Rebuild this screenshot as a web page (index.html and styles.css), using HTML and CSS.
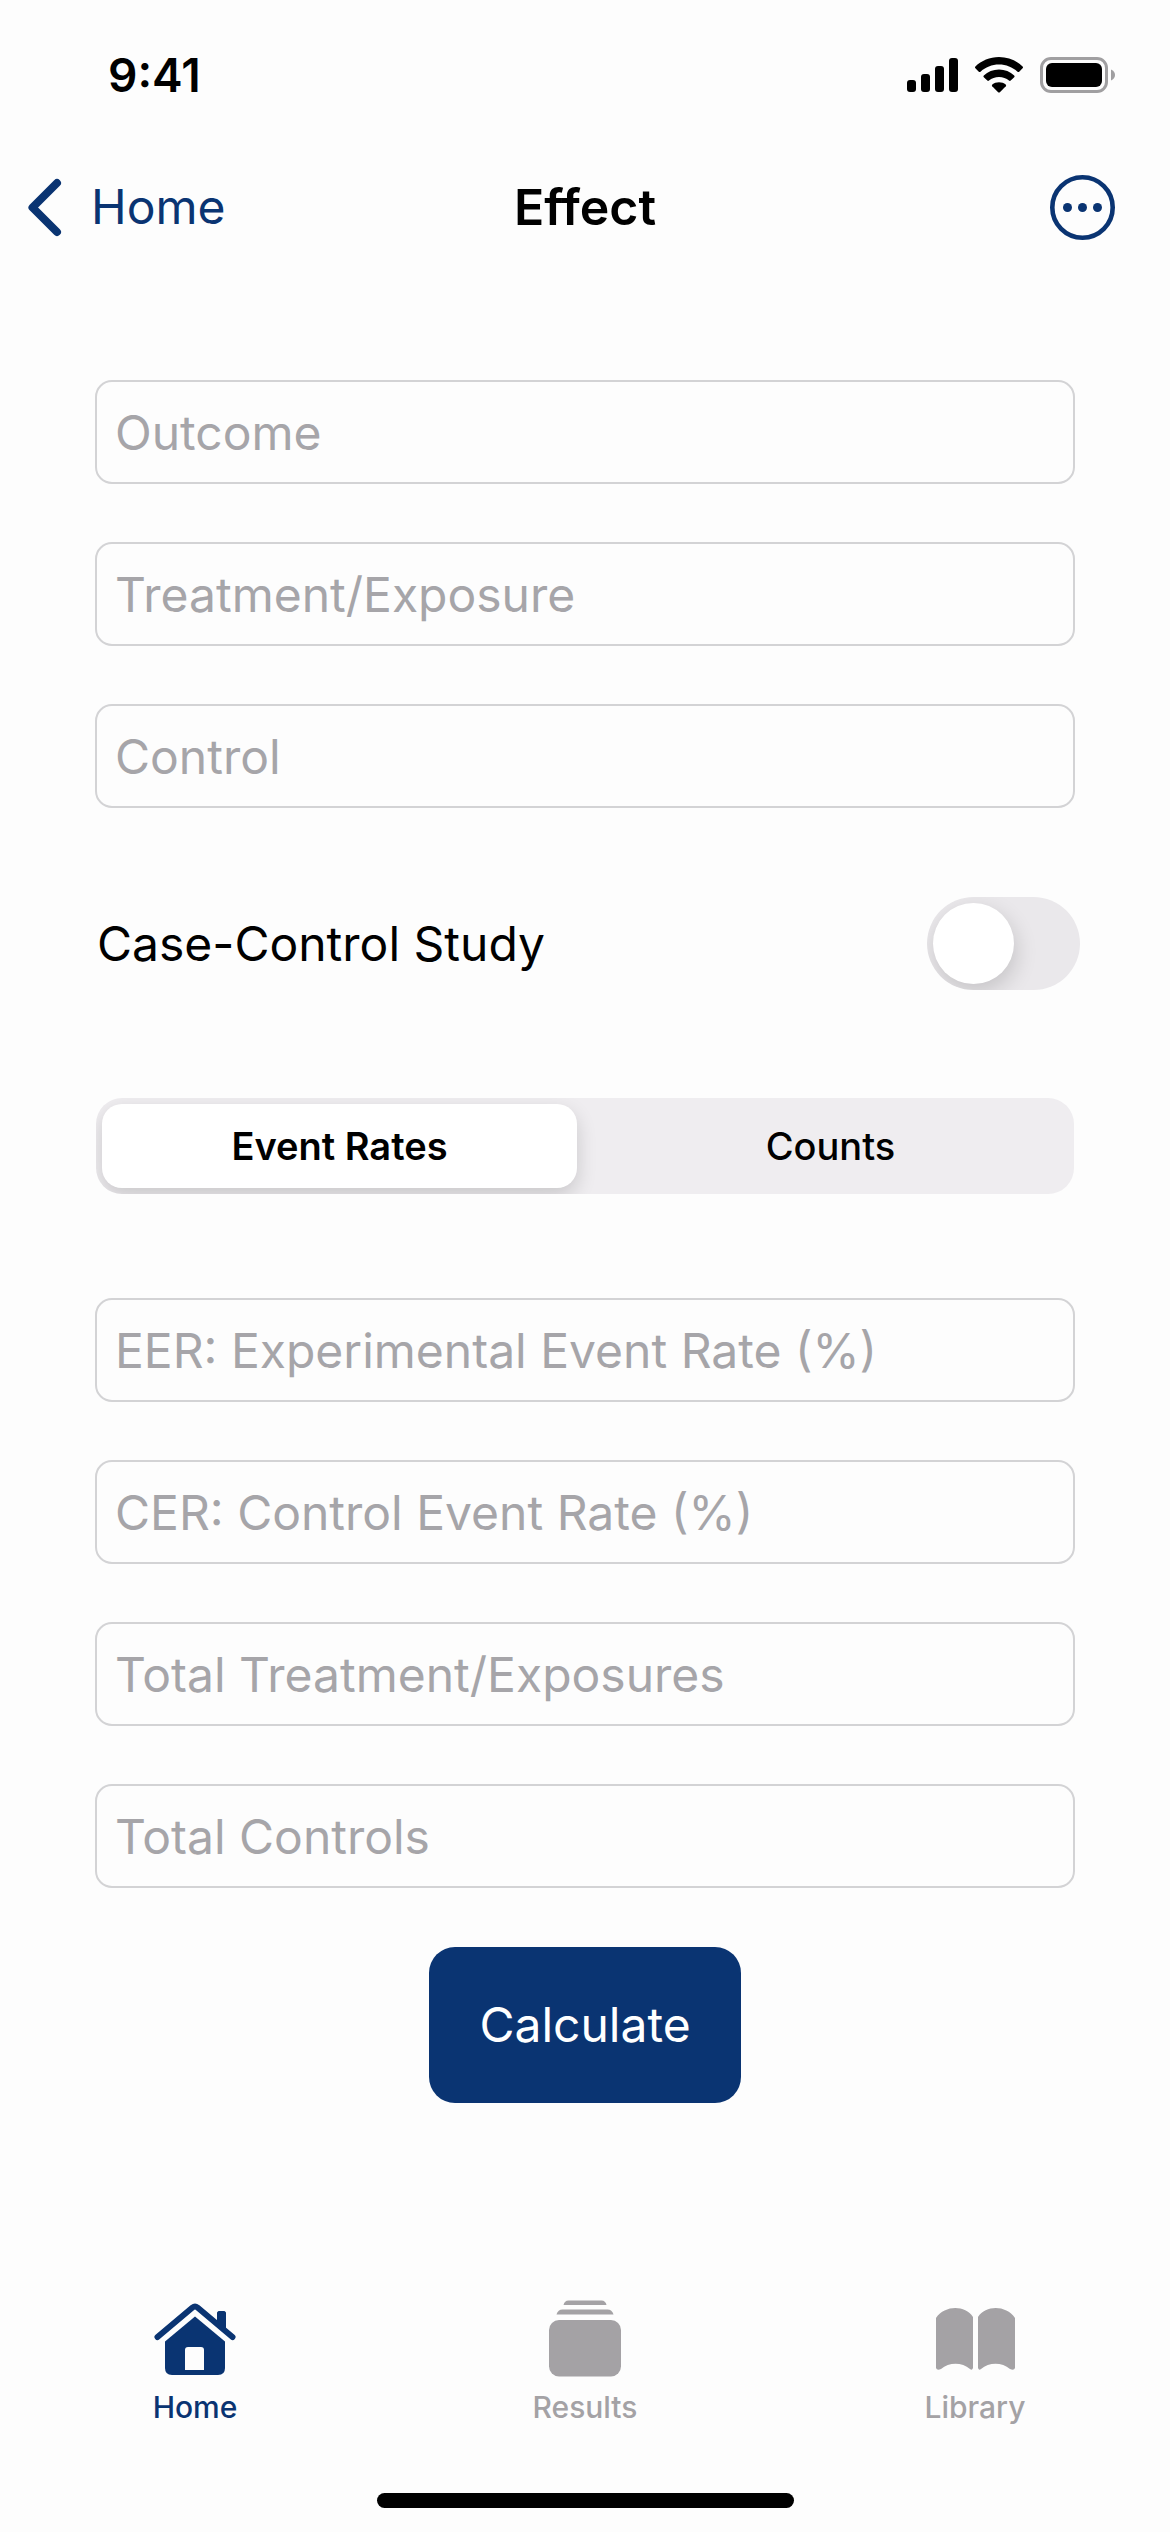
FILE: index.html
```html
<!DOCTYPE html>
<html lang="en">
<head>
<meta charset="utf-8">
<meta name="viewport" content="width=device-width, initial-scale=1">
<title>Effect</title>
<link rel="stylesheet" href="styles.css">
</head>
<body>
<div class="status-bar">
  <time class="clock">9:41</time>
  <div class="status-icons">
    <svg width="51" height="34" viewBox="0 0 51 34" aria-hidden="true"><rect x="0" y="22" width="9" height="12" rx="3"/><rect x="14" y="16" width="9" height="18" rx="3"/><rect x="28" y="8" width="9" height="26" rx="3"/><rect x="42" y="0" width="9" height="34" rx="3"/></svg>
    <svg width="48" height="36" viewBox="0 0 48 36" aria-hidden="true"><path d="M24 0C33.300 0 41.500 3.600 47.600 9.400Q48.500 10.300 47.600 11.200L44.200 14.700Q43.400 15.500 42.500 14.700C37.600 10.300 31 7.600 24 7.600S10.400 10.300 5.500 14.700Q4.600 15.500 3.800 14.700L.4 11.200Q-.5 10.300.4 9.400C6.500 3.600 14.700 0 24 0Z"/><path d="M24 12.600C29.900 12.600 35.200 14.800 39.200 18.400Q40.100 19.300 39.200 20.200L35.700 23.600Q34.900 24.400 34 23.600C31.300 21.400 27.800 20.100 24 20.100S16.700 21.400 14 23.600Q13.100 24.400 12.300 23.600L8.800 20.200Q7.900 19.300 8.800 18.400C12.800 14.800 18.100 12.600 24 12.600Z"/><path d="M24 25.200C26.600 25.200 28.900 26.100 30.700 27.500Q31.600 28.300 30.800 29.200L24.900 35.200Q24 36 23.100 35.200L17.200 29.200Q16.400 28.300 17.300 27.500C19.100 26.100 21.400 25.200 24 25.200Z"/></svg>
    <svg width="75" height="36" viewBox="0 0 75 36" aria-hidden="true"><rect x="1.500" y="1.500" width="65" height="33" rx="9.500" fill="none" stroke="#a09fa1" stroke-width="3"/><rect x="6" y="6" width="56" height="24" rx="6"/><path d="M71 12.500C73.600 13.500 75 15.600 75 18S73.600 22.500 71 23.500Z" fill="#a09fa1"/></svg>
  </div>
</div>

<header class="nav-bar">
  <a class="back" href="#home">
    <svg width="33" height="57" viewBox="0 0 33 57" aria-hidden="true"><path d="M29 4L4.500 28.500L29 53" fill="none" stroke="currentColor" stroke-width="8" stroke-linecap="round" stroke-linejoin="round"/></svg>
    <span>Home</span>
  </a>
  <h1 class="title">Effect</h1>
  <button class="more" type="button" aria-label="More options">
    <svg width="65" height="65" viewBox="0 0 65 65" aria-hidden="true"><circle cx="32.500" cy="32.500" r="30.200" fill="none" stroke="currentColor" stroke-width="4.600"/><circle cx="17.500" cy="32.500" r="4.500" fill="currentColor"/><circle cx="32.500" cy="32.500" r="4.500" fill="currentColor"/><circle cx="47.500" cy="32.500" r="4.500" fill="currentColor"/></svg>
  </button>
</header>

<main>
  <form class="form">
    <div class="fields">
      <input class="field" type="text" placeholder="Outcome" aria-label="Outcome">
      <input class="field" type="text" placeholder="Treatment/Exposure" aria-label="Treatment/Exposure">
      <input class="field" type="text" placeholder="Control" aria-label="Control">
    </div>
    <div class="switch-row">
      <label for="case-control">Case-Control Study</label>
      <input class="switch" id="case-control" type="checkbox" role="switch">
    </div>
    <div class="segments" role="radiogroup" aria-label="Input type">
      <input type="radio" name="mode" id="rates" checked>
      <label for="rates">Event Rates</label>
      <input type="radio" name="mode" id="counts">
      <label for="counts">Counts</label>
    </div>
    <div class="fields">
      <input class="field" type="text" placeholder="EER: Experimental Event Rate (%)" aria-label="EER: Experimental Event Rate (%)">
      <input class="field" type="text" placeholder="CER: Control Event Rate (%)" aria-label="CER: Control Event Rate (%)">
      <input class="field" type="text" placeholder="Total Treatment/Exposures" aria-label="Total Treatment/Exposures">
      <input class="field" type="text" placeholder="Total Controls" aria-label="Total Controls">
    </div>
    <button class="calculate" type="button">Calculate</button>
  </form>
</main>

<nav class="tab-bar">
  <a class="tab active" href="#home" aria-current="page">
    <svg width="82" height="78" viewBox="0 0 82 78" aria-hidden="true"><g fill="currentColor"><path d="M63 25V11Q63 8 66 8H69Q72 8 72 11V31Z"/><path d="M41 13.500L71 38.500V65Q71 72 64 72H18Q11 72 11 65V38.500Z"/></g><path d="M3.500 34L38.500 4.500Q41 2.500 43.500 4.500L78.500 34" fill="none" stroke="#fdfdfd" stroke-width="14"/><path d="M63 20V11Q63 8 66 8H69Q72 8 72 11V28Z" fill="currentColor"/><path d="M3.500 34L38.500 4.500Q41 2.500 43.500 4.500L78.500 34" fill="none" stroke="currentColor" stroke-width="6" stroke-linecap="round"/><path d="M31 67V47Q31 44 34 44H47Q50 44 50 47V67Z" fill="#fdfdfd"/></svg>
    <span>Home</span>
  </a>
  <a class="tab" href="#results">
    <svg width="72" height="78" viewBox="0 0 72 78" fill="currentColor" aria-hidden="true"><path d="M14.500 2Q15.500-2.500 19.500-2.500H52.500Q56.500-2.500 57.500 2Z"/><path d="M7.500 11.500Q9 6.500 13.500 6.500H58.500Q63 6.500 64.500 11.500Z"/><rect x="0" y="17" width="72" height="56.500" rx="10"/></svg>
    <span>Results</span>
  </a>
  <a class="tab" href="#library">
    <svg width="79" height="78" viewBox="0 0 79 78" fill="currentColor" aria-hidden="true"><path d="M0 15C9 2 29 2 37 14V65Q36 68 34 66C26 59 13 59 5 66Q1 68 0 65Z"/><path d="M42 14C50 2 70 2 79 15V65Q78 68 74 66C66 59 53 59 45 66Q43 68 42 65Z"/></svg>
    <span>Library</span>
  </a>
</nav>
<div class="home-indicator"></div>
</body>
</html>
```
FILE: styles.css
```css
* {
  box-sizing: border-box;
}

body {
  margin: 0;
  min-height: 100vh;
  display: flex;
  flex-direction: column;
  background: #fdfdfd;
  color: #000;
  font-family: Inter, "Liberation Sans", sans-serif;
  font-size: 48px;
  line-height: 60px;
}

svg {
  display: block;
  overflow: visible;
}

a {
  color: inherit;
  text-decoration: none;
}

button,
input {
  margin: 0;
  font: inherit;
}

.status-bar {
  display: flex;
  justify-content: space-between;
  align-items: center;
  height: 150px;
  padding: 0 55px 0 108px;
}

.clock {
  font-size: 46px;
  font-weight: 600;
}

.status-icons {
  display: flex;
  align-items: center;
  gap: 17px;
}

.nav-bar {
  display: grid;
  grid-template-columns: 1fr auto 1fr;
  align-items: center;
  height: 114px;
  padding: 0 55px 0 28px;
}

.back {
  display: flex;
  align-items: center;
  gap: 30px;
  color: #0a3472;
}

.title {
  margin: 0;
  padding-left: 27px;
  font-size: 50px;
  font-weight: 600;
}

.more {
  justify-self: end;
  padding: 0;
  border: 0;
  background: none;
  color: #0a3472;
}

.form {
  display: flex;
  flex-direction: column;
  padding: 116px 95px 0;
}

.fields {
  display: flex;
  flex-direction: column;
  gap: 58px;
}

.field {
  width: 100%;
  height: 104px;
  padding: 0 18px;
  border: 2px solid #d3d3d5;
  border-radius: 17px;
  background: #fdfdfd;
  outline: none;
}

.field::placeholder {
  color: #a6a5a9;
  opacity: 1;
}

.switch-row {
  display: flex;
  justify-content: space-between;
  align-items: center;
  margin: 89px -5px 108px 2px;
}

.switch {
  appearance: none;
  width: 153px;
  height: 93px;
  padding: 6px;
  border-radius: 47px;
  background: #eae8eb;
  overflow: hidden;
}

.switch::before {
  content: "";
  display: block;
  width: 81px;
  height: 81px;
  border-radius: 50%;
  background: #fff;
  box-shadow: 2px 8px 22px rgba(0, 0, 0, 0.16);
}

.switch:checked {
  background: #0a3472;
}

.switch:checked::before {
  margin-left: auto;
}

.segments {
  display: flex;
  height: 96px;
  margin: 0 1px 104px;
  padding: 6px;
  border-radius: 26px;
  background: #efedf0;
  overflow: hidden;
  font-size: 38px;
}

.segments input {
  appearance: none;
  width: 0;
  height: 0;
}

.segments label {
  flex: 1 1 0;
  display: flex;
  justify-content: center;
  align-items: center;
  border-radius: 20px;
  font-weight: 500;
}

.segments label + input {
  margin-left: 16px;
}

.segments input:checked + label {
  background: #fff;
  font-weight: 600;
  box-shadow: 0 8px 20px rgba(0, 0, 0, 0.16);
}

.calculate {
  align-self: center;
  margin-top: 59px;
  padding: 48px 50px;
  border: 0;
  border-radius: 26px;
  background: #0a3472;
  color: #fff;
}

.tab-bar {
  display: flex;
  margin-top: auto;
  color: #a4a2a5;
  font-size: 30px;
  font-weight: 500;
  line-height: 36px;
}

.tab {
  flex: 1;
  display: flex;
  flex-direction: column;
  align-items: center;
  gap: 8px;
}

.active {
  color: #0a3472;
}

.home-indicator {
  width: 417px;
  height: 15px;
  margin: 68px auto 24px;
  border-radius: 8px;
  background: #000;
}
```
